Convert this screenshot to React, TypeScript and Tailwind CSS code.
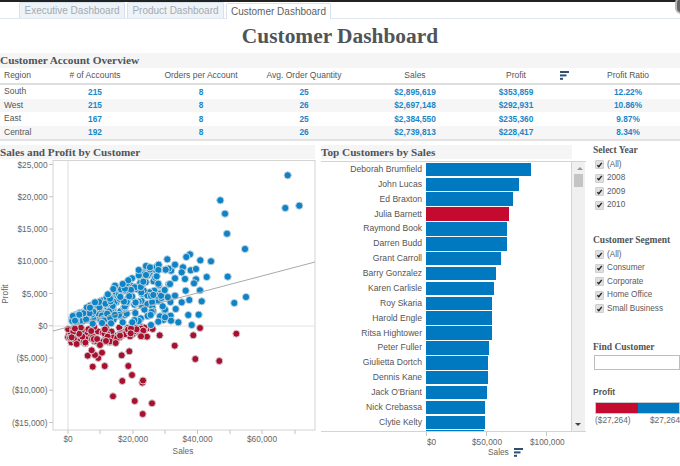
// App.tsx
const serif = "font-['Liberation_Serif',serif] font-bold text-[#4f5458]";

const regions = [
  { name: "South", accounts: 215, orders: 8, qty: 25, sales: "$2,895,619", profit: "$353,859", ratio: "12.22%" },
  { name: "West", accounts: 215, orders: 8, qty: 26, sales: "$2,697,148", profit: "$292,931", ratio: "10.86%" },
  { name: "East", accounts: 167, orders: 8, qty: 25, sales: "$2,384,550", profit: "$235,360", ratio: "9.87%" },
  { name: "Central", accounts: 192, orders: 8, qty: 26, sales: "$2,739,813", profit: "$228,417", ratio: "8.34%" },
];

const customers = [
  { name: "Deborah Brumfield", w: 105 },
  { name: "John Lucas", w: 93 },
  { name: "Ed Braxton", w: 87 },
  { name: "Julia Barnett", w: 83, red: true },
  { name: "Raymond Book", w: 81 },
  { name: "Darren Budd", w: 81 },
  { name: "Grant Carroll", w: 75 },
  { name: "Barry Gonzalez", w: 70 },
  { name: "Karen Carlisle", w: 68 },
  { name: "Roy Skaria", w: 66 },
  { name: "Harold Engle", w: 66 },
  { name: "Ritsa Hightower", w: 66 },
  { name: "Peter Fuller", w: 63 },
  { name: "Giulietta Dortch", w: 62 },
  { name: "Dennis Kane", w: 62 },
  { name: "Jack O'Briant", w: 61 },
  { name: "Nick Crebassa", w: 59 },
  { name: "Clytie Kelty", w: 59 },
  { name: "", w: 58 },
];

const blueDots = [
  [287.7, 176.3], [285.3, 209], [299.3, 206.7], [220.3, 201.3], [225, 214.7], [227, 234.7], [245, 250],
  [227.7, 277.7], [246, 298], [234.3, 304], [211, 262.3], [200.3, 261.3], [190, 255.3], [186.3, 258],
  [167.3, 260.3], [183, 268.3], [190.7, 271.3], [196, 270], [175, 265.7], [158.7, 265.7], [165.7, 270.7],
  [146, 267], [138.7, 271], [150, 268.3], [158.3, 271], [181.7, 273.3], [206.7, 278], [196, 280.3],
  [185, 280], [175, 279.3], [194, 284.3], [156.7, 277.3], [146, 276], [132, 279.3], [128.3, 281.3],
  [122.7, 285], [170, 285], [158.3, 284.7], [200, 291.3], [185.7, 291.7], [164.7, 291], [175, 296.7],
  [201.7, 302.3], [189.3, 301], [181.7, 303.3], [153.3, 296], [143.3, 282.7], [115, 286.7], [113.3, 290],
  [95, 303.3], [90, 308.7], [178.3, 323.3], [191.7, 326], [171, 321.7], [188.3, 316], [198.7, 315.7],
  [175.7, 310], [162.7, 307.3], [160, 317.3], [165, 318.3], [158.3, 322.7], [150.7, 316], [151, 326],
  [132.3, 323.3], [122.7, 323.3], [111, 324.3], [102, 324], [92.7, 324.7], [83.3, 314.3], [79.3, 315.7],
  [75, 321.7],
];

const redDots = [
  [142.7, 415], [152, 404.3], [134.7, 402], [113, 397.3], [142.3, 383.7], [143, 381.5], [122.3, 382],
  [132, 376], [128.3, 367], [104.7, 367], [92.7, 367.7], [98.3, 359], [87.7, 356.7], [95, 356],
  [91.7, 351.3], [102, 353.7], [121.7, 356.3], [129.3, 352.3], [195.3, 360], [219.3, 362], [174.7, 346.7],
  [193.3, 336.3], [236.3, 334.7], [200, 329], [159.7, 336.3], [143.3, 331.7], [147, 337.7], [141, 337.3],
  [152.7, 330], [131, 329.3], [130.7, 334.3], [120, 336.7], [115.7, 344], [106, 342], [76.7, 345],
  [71.7, 338.3], [100, 346],
];

// seeded so the cloud stays put between runs
const rand = (seed: number) => {
  const v = Math.sin(seed * 127.1) * 43758.5453;
  return v - Math.floor(v);
};

const blueCloud = Array.from({ length: 210 }, (_, i) => {
  const x = 72 + 100 * Math.pow(rand(i + 1), 1.2);
  const top = Math.max(266, 320 - (x - 68) * 0.62);
  return [x, top + (323 - top) * rand(i + 500)];
});

const redCloud = Array.from({ length: 100 }, (_, i) => {
  const x = 68 + 80 * rand(i + 900);
  const depth = x < 122 ? 17 : 10;
  return [x, 328 + depth * rand(i + 1300)];
});

const yTicks = [
  ["$25,000", 165.5], ["$20,000", 197.7], ["$15,000", 230], ["$10,000", 262.3], ["$5,000", 294.5],
  ["$0", 326.7], ["($5,000)", 359], ["($10,000)", 391.2], ["($15,000)", 423.5],
] as const;

function SortIcon() {
  return (
    <svg width="9" height="9" viewBox="0 0 9 9" fill="#2f4f6f">
      <rect x="0" y="0" width="9" height="2" />
      <rect x="0" y="3.4" width="6.5" height="2" />
      <rect x="0" y="6.8" width="3" height="2" />
    </svg>
  );
}

function Check({ label }: { label: string }) {
  return (
    <div className="flex h-[13.5px] items-center gap-[3px] pl-[2px] text-[8.2px] text-[#5a5a5a]">
      <span className="flex h-[9px] w-[9px] items-center justify-center rounded-[1px] border border-[#cfcfcf] bg-[#e0e0e0]">
        <svg width="8" height="8" viewBox="0 0 8 8" fill="none" stroke="#222" strokeWidth="1.6">
          <path d="M1.5 4.2 L3.2 6 L6.6 1.5" />
        </svg>
      </span>
      {label}
    </div>
  );
}

function Scatter() {
  return (
    <svg width="320" height="300" viewBox="0 160 320 300" className="block font-['Liberation_Sans',sans-serif]">
      <rect x="53" y="161.5" width="262" height="269.5" fill="#fff" stroke="#d4d4d4" />
      <line x1="68" y1="162" x2="68" y2="431" stroke="#dcdcdc" />
      <line x1="53" y1="327" x2="315" y2="327" stroke="#e2e2e2" />
      {yTicks.map(([label, y]) => (
        <g key={label}>
          <line x1="49" x2="53" y1={y} y2={y} stroke="#c4c4c4" />
          <text x="47.5" y={y + 3} textAnchor="end" fontSize="8.3" fill="#666">{label}</text>
        </g>
      ))}
      {[68, 100, 133, 165, 197.5, 230, 262, 295].map((x) => (
        <line key={x} x1={x} x2={x} y1="431" y2="435" stroke="#c4c4c4" />
      ))}
      {[["$0", 68], ["$20,000", 133], ["$40,000", 197.5], ["$60,000", 262]].map(([label, x]) => (
        <text key={label} x={x} y="443" textAnchor="middle" fontSize="8.3" fill="#666">{label}</text>
      ))}
      <text x="183" y="455" textAnchor="middle" fontSize="8.3" fill="#666">Sales</text>
      <text transform="translate(8 295) rotate(-90)" textAnchor="middle" fontSize="8.3" fill="#666">Profit</text>
      {redCloud.concat(redDots).map(([x, y], i) => (
        <circle key={i} cx={x} cy={y} r="3.5" fill="#a90f2e" stroke="#d4cdd0" strokeWidth="1" />
      ))}
      {blueCloud.concat(blueDots).map(([x, y], i) => (
        <circle key={i} cx={x} cy={y} r="3.6" fill="#0d84c6" stroke="#c2d5e1" strokeWidth="1" />
      ))}
      <line x1="53" y1="332" x2="315" y2="263" stroke="#a9a9a9" />
    </svg>
  );
}

export default function App() {
  return (
    <div className="relative flex h-[466px] w-[680px] flex-col overflow-hidden bg-white font-['Liberation_Sans',sans-serif]">
      <div className="h-[2px] bg-[#222]" />
      <div className="absolute right-[-7px] top-[-3px] h-[17px] w-[12px] rounded-full border-2 border-[#b9b9b9] bg-[#666]" />

      {/* tabs */}
      <div className="flex h-[17px] items-end gap-[2px] border-b border-[#dfe8f1] pl-[19px] pt-[2px] text-[10px]">
        <div className="flex h-[16px] w-[106px] items-center justify-center rounded-t-[2px] border border-b-0 border-[#d6e2ed] bg-[#eef3f8] text-[#a3aab0]">Executive Dashboard</div>
        <div className="flex h-[16px] w-[97px] items-center justify-center rounded-t-[2px] border border-b-0 border-[#d6e2ed] bg-[#eef3f8] text-[#a3aab0]">Product Dashboard</div>
        <div className="relative top-px flex h-[16px] w-[105px] items-center justify-center rounded-t-[2px] border border-b-0 border-[#d6e2ed] bg-white text-[#5a5f63]">Customer Dashboard</div>
      </div>

      <div className={`${serif} h-[34px] pt-[3px] text-center text-[21.4px] leading-[28px]`}>Customer Dashboard</div>

      {/* overview table */}
      <div className={`${serif} h-[15px] bg-[#f5f5f5] text-[11.3px] leading-[15px]`}>Customer Account Overview</div>
      <div className="grid h-[17px] grid-cols-[38px_114px_98px_108px_114px_88px_16px_104px] items-center border-b-2 border-[#dedede] text-center text-[8.5px] text-[#555]">
        <div className="pl-[4px] text-left">Region</div>
        <div># of Accounts</div>
        <div>Orders per Account</div>
        <div>Avg. Order Quantity</div>
        <div>Sales</div>
        <div>Profit</div>
        <div className="flex justify-start"><SortIcon /></div>
        <div>Profit Ratio</div>
      </div>
      <div className="border-b-2 border-[#e2e2e2]">
        {regions.map((r, i) => (
          <div
            key={r.name}
            className={`grid h-[13.5px] grid-cols-[38px_114px_98px_108px_114px_88px_16px_104px] items-center text-center text-[8.3px] font-bold text-[#1a86c8] ${i % 2 === 1 ? "bg-[#f6f6f6]" : "bg-white"}`}
          >
            <div className="h-full pl-[4px] text-left text-[8.5px] font-normal leading-[12px] text-[#555]">{r.name}</div>
            <div>{r.accounts}</div>
            <div>{r.orders}</div>
            <div>{r.qty}</div>
            <div>{r.sales}</div>
            <div>{r.profit}</div>
            <div />
            <div>{r.ratio}</div>
          </div>
        ))}
      </div>

      {/* charts + filters */}
      <div className="mt-[4px] flex">
        <div className="w-[318px] shrink-0">
          <div className={`${serif} h-[14px] w-[315px] bg-[#f5f5f5] text-[11.2px] leading-[14px]`}>Sales and Profit by Customer</div>
          <Scatter />
        </div>

        <div className="ml-[3px] w-[265px] shrink-0">
          <div className={`${serif} h-[14px] w-[251px] bg-[#f5f5f5] text-[11.2px] leading-[14px]`}>Top Customers by Sales</div>
          <div className="mt-[2px] flex h-[271px] border-b border-t border-[#d4d4d4]">
            <div className="h-full w-[251px] overflow-hidden border-r border-[#d4d4d4]">
              {customers.map((c) => (
                <div key={c.name} className="flex h-[14.88px] items-center">
                  <div className="w-[103px] pr-[2px] text-right text-[8.6px] text-[#555]">{c.name}</div>
                  <div className="ml-[2px] h-[13.6px] bg-[#0079c1] data-[red=true]:bg-[#c40a2f]" data-red={c.red ? "true" : "false"} style={{ width: c.w }} />
                </div>
              ))}
            </div>
            <div className="relative w-[13px] bg-[#f0f0f0]">
              <div className="absolute left-[5px] top-[5px] h-0 w-0 border-x-[3px] border-b-[3px] border-x-transparent border-b-[#999]" />
              <div className="absolute left-[2px] top-[12px] h-[13px] w-[9px] bg-[#c4c4c4]" />
              <div className="absolute bottom-[5px] left-[3px] h-0 w-0 border-x-[3px] border-t-[3px] border-x-transparent border-t-[#444]" />
            </div>
          </div>
          <div className="relative h-[30px] w-[251px] text-[8.3px] text-[#666]">
            <div className="absolute left-[105px] top-0 h-[4px] w-px bg-[#c4c4c4]" />
            <div className="absolute left-[165px] top-0 h-[4px] w-px bg-[#c4c4c4]" />
            <div className="absolute left-[225px] top-0 h-[4px] w-px bg-[#c4c4c4]" />
            <div className="absolute left-[106px] top-[4px]">$0</div>
            <div className="absolute left-[151px] top-[4px]">$50,000</div>
            <div className="absolute left-[209px] top-[4px]">$100,000</div>
            <div className="absolute left-[167px] top-[14px] flex items-center gap-[5px]">Sales <SortIcon /></div>
          </div>
        </div>

        {/* filter pane */}
        <div className="ml-[7px] mt-[-1px] flex-1">
          <div className={`${serif} text-[9.5px] leading-[12px]`}>Select Year</div>
          <div className="mt-[2px]">
            {["(All)", "2008", "2009", "2010"].map((l) => <Check key={l} label={l} />)}
          </div>
          <div className={`${serif} mt-[22px] text-[9.5px] leading-[12px]`}>Customer Segment</div>
          <div className="mt-[2px]">
            {["(All)", "Consumer", "Corporate", "Home Office", "Small Business"].map((l) => <Check key={l} label={l} />)}
          </div>
          <div className={`${serif} mt-[25px] text-[9.5px] leading-[12px]`}>Find Customer</div>
          <div className="ml-px mt-[2px] h-[15px] border border-[#bdbdbd] bg-white" />
          <div className="mt-[17px] text-[8.5px] font-bold leading-[10px] text-[#555]">Profit</div>
          <div className="ml-[2px] mt-[5px] flex h-[12px] border border-[#c8c8c8]">
            <div className="h-full w-1/2 bg-[#c40a2f]" />
            <div className="h-full w-1/2 bg-[#0079c1]" />
          </div>
          <div className="ml-[2px] flex justify-between text-[8.3px] text-[#666]">
            <span>($27,264)</span>
            <span>$27,264</span>
          </div>
        </div>
      </div>
    </div>
  );
}
